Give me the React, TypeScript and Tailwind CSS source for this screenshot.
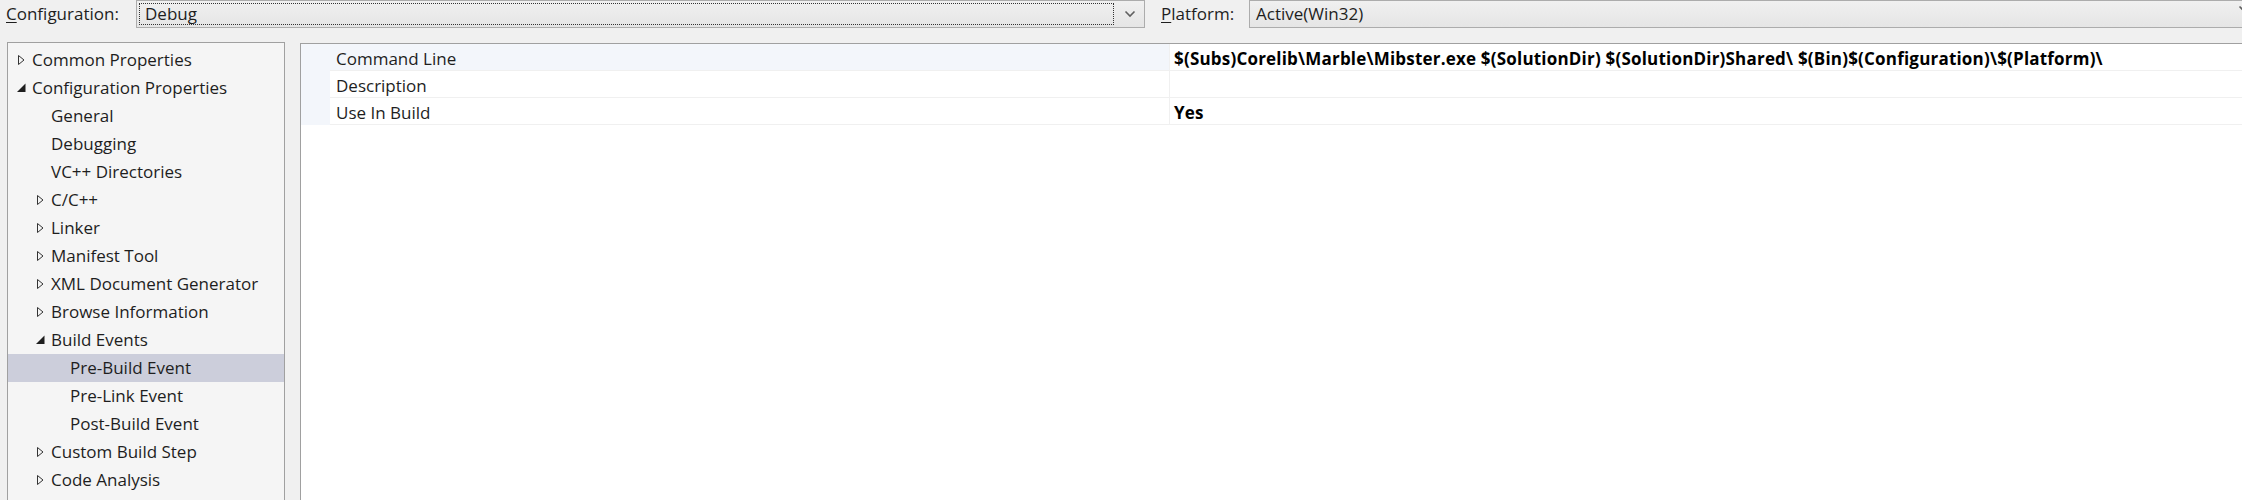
import React from "react";

const font = { fontFamily: '"Segoe UI", "Open Sans", "Noto Sans", sans-serif' };

type TreeItem = {
  label: string;
  level: number;
  arrow?: "closed" | "open";
  selected?: boolean;
};

const treeItems: TreeItem[] = [
  { label: "Common Properties", level: 0, arrow: "closed" },
  { label: "Configuration Properties", level: 0, arrow: "open" },
  { label: "General", level: 1 },
  { label: "Debugging", level: 1 },
  { label: "VC++ Directories", level: 1 },
  { label: "C/C++", level: 1, arrow: "closed" },
  { label: "Linker", level: 1, arrow: "closed" },
  { label: "Manifest Tool", level: 1, arrow: "closed" },
  { label: "XML Document Generator", level: 1, arrow: "closed" },
  { label: "Browse Information", level: 1, arrow: "closed" },
  { label: "Build Events", level: 1, arrow: "open" },
  { label: "Pre-Build Event", level: 2, selected: true },
  { label: "Pre-Link Event", level: 2 },
  { label: "Post-Build Event", level: 2 },
  { label: "Custom Build Step", level: 1, arrow: "closed" },
  { label: "Code Analysis", level: 1, arrow: "closed" },
];

const gridRows = [
  {
    name: "Command Line",
    value:
      "$(Subs)Corelib\\Marble\\Mibster.exe $(SolutionDir) $(SolutionDir)Shared\\ $(Bin)$(Configuration)\\$(Platform)\\",
    active: true,
  },
  { name: "Description", value: "" },
  { name: "Use In Build", value: "Yes" },
];

const Arrow = ({ kind }: { kind?: "closed" | "open" }) => {
  if (kind === "closed") {
    return (
      <svg width="9" height="12" viewBox="0 0 9 12" className="shrink-0">
        <path d="M1.5 1.5 L7 6 L1.5 10.5 Z" fill="none" stroke="#333" strokeWidth="1" />
      </svg>
    );
  }
  if (kind === "open") {
    return (
      <svg width="9" height="12" viewBox="0 0 9 12" className="shrink-0">
        <path d="M8.5 1.5 L8.5 10 L0 10 Z" fill="#1e1e1e" />
      </svg>
    );
  }
  return <span className="w-[9px] shrink-0" />;
};

const Chevron = () => (
  <svg width="12" height="8" viewBox="0 0 12 8">
    <path d="M1.5 1.5 L6 6 L10.5 1.5" fill="none" stroke="#606060" strokeWidth="1.6" />
  </svg>
);

export default function App() {
  return (
    <div
      className="w-[2242px] h-[500px] overflow-hidden bg-[#f0f0f0] text-[17px] text-[#1e1e1e]"
      style={font}
    >
      {/* top bar */}
      <div className="flex h-[28px] items-stretch">
        <div className="w-[136px] pl-[6px] flex items-center">
          <span>
            <span className="underline underline-offset-2">C</span>onfiguration:
          </span>
        </div>
        <div className="w-[1009px] flex items-stretch border border-[#acacac] bg-gradient-to-b from-[#f0f0f0] to-[#e5e5e5]">
          <div className="flex-1 m-[2px] border border-dotted border-[#333] flex items-center pl-[5px]">
            Debug
          </div>
          <div className="w-[28px] flex items-center justify-center">
            <Chevron />
          </div>
        </div>
        <div className="w-[104px] pl-[16px] flex items-center">
          <span>
            <span className="underline underline-offset-2">P</span>latform:
          </span>
        </div>
        <div className="flex-1 flex items-center justify-between border border-r-0 border-[#acacac] bg-gradient-to-b from-[#f0f0f0] to-[#e5e5e5] pl-[6px]">
          <span>Active(Win32)</span>
          <span className="-mr-[8px] mb-[10px]">
            <Chevron />
          </span>
        </div>
      </div>

      {/* body */}
      <div className="flex pt-[14px]">
        <div className="ml-[7px] w-[278px] h-[470px] border border-[#a0a0a0] bg-[#f5f5f5] pt-[3px]">
          {treeItems.map((it) => (
            <div
              key={it.label}
              className={
                "h-[28px] flex items-center gap-[6px] " +
                (it.selected ? "bg-[#cccedb]" : "")
              }
              style={{ paddingLeft: 9 + it.level * 19 }}
            >
              <Arrow kind={it.arrow} />
              <span className="whitespace-nowrap">{it.label}</span>
            </div>
          ))}
        </div>

        <div className="ml-[15px] mt-[1px] flex-1 h-[470px] border border-r-0 border-[#a0a0a0] bg-white">
          {gridRows.map((r) => (
            <div key={r.name} className="flex h-[27px]">
              <div className="w-[29px] bg-[#f3f6fb]" />
              <div
                className={
                  "w-[839px] flex items-center pl-[6px] pt-[3px] border-b border-[#f0f0f0] " +
                  (r.active ? "bg-[#f3f6fb]" : "bg-white")
                }
              >
                {r.name}
              </div>
              <div className="flex-1 flex items-center pl-[4px] pt-[3px] border-b border-l border-[#f0f0f0] font-bold text-black whitespace-nowrap tracking-[0.2px]">
                {r.value}
              </div>
            </div>
          ))}
        </div>
      </div>
    </div>
  );
}
